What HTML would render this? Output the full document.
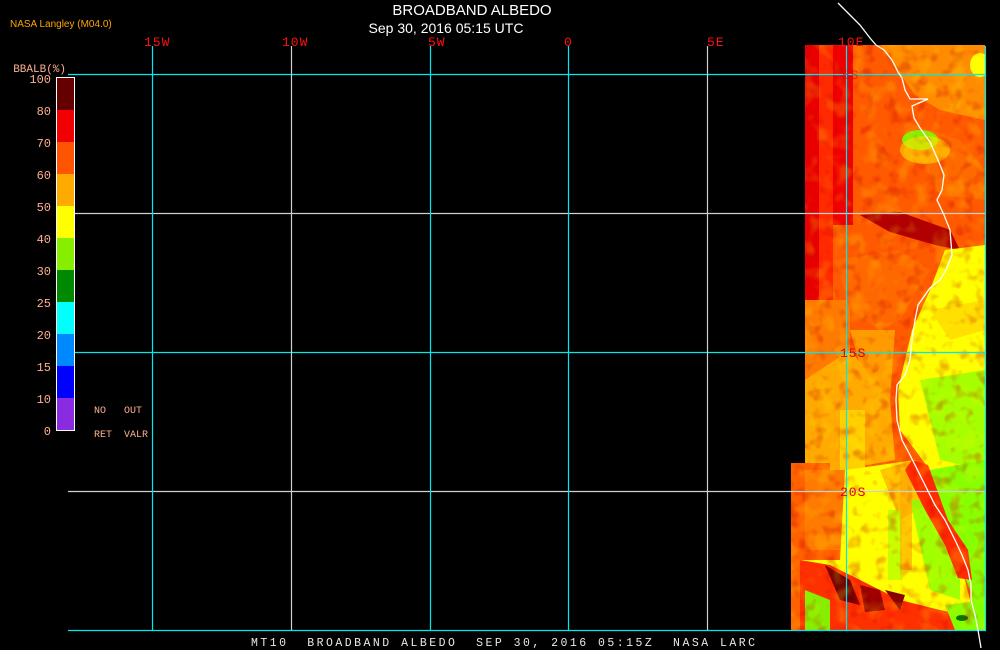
<!DOCTYPE html>
<html><head><style>
html,body{margin:0;padding:0;background:#000;width:1000px;height:650px;overflow:hidden}
svg{display:block}
text{font-family:"Liberation Sans",sans-serif}
.m text, text.m{font-family:"Liberation Mono","DejaVu Sans Mono",monospace}
</style></head><body>
<svg width="1000" height="650" viewBox="0 0 1000 650">
<defs>
<filter id="n" x="0" y="0" width="1" height="1">
<feTurbulence type="fractalNoise" baseFrequency="0.08" numOctaves="2" seed="4"/>
<feColorMatrix values="0 0 0 0 0.6  0 0 0 0 0  0 0 0 0 0  0 0 0 -4 1.9"/>
</filter>
<filter id="g" x="0" y="0" width="1" height="1">
<feTurbulence type="fractalNoise" baseFrequency="0.06" numOctaves="2" seed="9"/>
<feColorMatrix values="0 0 0 0 1  0 0 0 0 0.9  0 0 0 0 0  0 0 0 -4 2.0"/>
</filter>
<clipPath id="c"><path d="M805 45H985V630H791V463H805Z"/></clipPath>
</defs>
<g clip-path="url(#c)">
<rect x="780" y="40" width="210" height="600" fill="#ff5a00"/>
<rect x="805" y="45" width="14" height="420" fill="#e80000"/>
<rect x="819" y="45" width="14" height="260" fill="#ff2a00"/>
<rect x="833" y="45" width="20" height="180" fill="#f00000"/>
<rect x="805" y="300" width="45" height="170" fill="#ff7a00"/>
<polygon points="880,45 985,45 985,120 940,110 915,95" fill="#ff8c00"/>
<polygon points="900,120 960,140 985,170 985,200 940,195" fill="#ff6a00"/>
<ellipse cx="920" cy="140" rx="18" ry="10" fill="#88ee00"/>
<ellipse cx="925" cy="150" rx="25" ry="14" fill="#ffdd00" opacity=".6"/>
<ellipse cx="980" cy="65" rx="10" ry="12" fill="#ffff00"/>
<polygon points="860,215 900,212 950,230 960,250 935,245 890,232" fill="#b00000"/>
<polygon points="945,250 985,245 985,470 930,470 900,430 898,390 912,330 930,290" fill="#ffff00"/>
<polygon points="930,310 985,300 985,330 950,340" fill="#ffe000"/>
<polygon points="920,380 985,370 985,470 940,460" fill="#88ff00" opacity=".75"/>
<polygon points="835,260 900,250 930,270 900,320 880,330 850,310" fill="#ff6800"/>
<polygon points="850,330 895,330 890,400 870,400" fill="#ff9a00"/>
<polygon points="805,380 850,350 890,400 895,460 840,470 805,470" fill="#ffaa00"/>
<rect x="840" y="410" width="25" height="60" fill="#ffd000"/>
<polygon points="791,463 830,463 830,630 791,630" fill="#ff6000"/>
<rect x="805" y="470" width="40" height="80" fill="#ff7a00"/>
<polygon points="845,470 915,460 955,540 970,600 975,630 800,630 800,560 840,560" fill="#ffff00"/>
<polygon points="880,470 915,460 935,500 900,520" fill="#ffc000"/>
<polygon points="930,470 985,460 985,630 975,630 970,590 950,540" fill="#88ff00"/>
<polygon points="910,500 930,500 960,560 960,600 930,590" fill="#88ff00" opacity=".8"/>
<rect x="888" y="510" width="14" height="70" fill="#aaff00" opacity=".7"/>
<rect x="900" y="470" width="12" height="100" fill="#ffa000" opacity=".6"/>
<polygon points="912,460 928,465 948,520 968,550 972,580 958,578 945,545 925,510 905,470" fill="#ff2a00"/>
<polygon points="800,560 830,565 870,585 900,600 940,610 965,615 970,630 800,630" fill="#ff3000"/>
<polygon points="825,565 850,580 860,605 840,600" fill="#700000"/>
<polygon points="860,585 880,590 885,610 865,612" fill="#9a0000"/>
<polygon points="885,590 905,595 900,610" fill="#880000"/>
<polygon points="805,590 830,600 830,630 805,630" fill="#88ee00"/>
<polygon points="945,605 985,600 985,630 955,630" fill="#88ff00"/>
<ellipse cx="962" cy="618" rx="6" ry="3" fill="#007a00"/>
<rect x="780" y="40" width="210" height="600" filter="url(#n)" opacity=".3"/>
<rect x="780" y="40" width="210" height="600" filter="url(#g)" opacity=".2"/>
</g>
<g stroke-width="1.2">
<line x1="68" y1="74.5" x2="986" y2="74.5" stroke="#00e8f0"/>
<line x1="68" y1="213.5" x2="986" y2="213.5" stroke="#d0d0d0"/>
<line x1="68" y1="352.5" x2="986" y2="352.5" stroke="#00e8f0"/>
<line x1="68" y1="491.5" x2="986" y2="491.5" stroke="#d0d0d0"/>
<line x1="68" y1="630.5" x2="986" y2="630.5" stroke="#00e8f0"/>
<line x1="152.5" y1="46" x2="152.5" y2="630" stroke="#00e8f0"/>
<line x1="291.5" y1="46" x2="291.5" y2="630" stroke="#d0d0d0"/>
<line x1="430.5" y1="46" x2="430.5" y2="630" stroke="#00e8f0"/>
<line x1="568.5" y1="46" x2="568.5" y2="630" stroke="#00e8f0"/>
<line x1="707.5" y1="46" x2="707.5" y2="630" stroke="#d0d0d0"/>
<line x1="846.5" y1="46" x2="846.5" y2="630" stroke="#00e8f0"/>
<line x1="985.5" y1="46" x2="985.5" y2="630" stroke="#00e8f0"/>
</g>
<polyline fill="none" stroke="#fff" stroke-width="1.3" points="838,3 860,25 870,38 876,45 884,50 892,60 898,72 902,78 905,90 910,99 928,99 912,106 914,118 920,128 930,142 938,160 944,175 942,190 937,200 944,215 950,230 952,255 946,270 940,280 930,288 918,305 915,320 912,340 910,360 905,375 897,385 896,400 897,420 902,440 910,455 915,465 925,485 935,505 945,520 955,540 962,555 968,570 971,585 971,600 975,615 978,630 981,648"/>
<g class="m" font-size="13" letter-spacing="1">
<text x="840" y="357" fill="#e00000">15S</text>
<text x="840" y="496" fill="#e00000">20S</text>
<text x="842" y="79" fill="#e00000" opacity=".6">5S</text>
</g>
<g class="m" fill="#ff1010" font-size="13" letter-spacing="1">
<text x="144" y="46">15W</text>
<text x="282" y="46">10W</text>
<text x="428" y="46">5W</text>
<text x="564" y="46">0</text>
<text x="707" y="46">5E</text>
<text x="838" y="46">10E</text>
</g>
<text x="472" y="15" fill="#fff" font-size="15" text-anchor="middle">BROADBAND ALBEDO</text>
<text x="446" y="33" fill="#fff" font-size="14" text-anchor="middle">Sep 30, 2016 05:15 UTC</text>
<text x="10" y="27" fill="#ffa500" font-size="10">NASA Langley (M04.0)</text>
<g>
<rect x="57" y="78" width="17" height="32" fill="#660000"/>
<rect x="57" y="110" width="17" height="32" fill="#f00000"/>
<rect x="57" y="142" width="17" height="32" fill="#ff5500"/>
<rect x="57" y="174" width="17" height="32" fill="#ffaa00"/>
<rect x="57" y="206" width="17" height="32" fill="#ffff00"/>
<rect x="57" y="238" width="17" height="32" fill="#88ee00"/>
<rect x="57" y="270" width="17" height="32" fill="#008800"/>
<rect x="57" y="302" width="17" height="32" fill="#00ffff"/>
<rect x="57" y="334" width="17" height="32" fill="#0088ff"/>
<rect x="57" y="366" width="17" height="32" fill="#0000ff"/>
<rect x="57" y="398" width="17" height="32" fill="#8a2be2"/>
<rect x="56.5" y="77.5" width="18" height="353" fill="none" stroke="#fff" stroke-width="1"/>
</g>
<g class="m" fill="#ffb090" font-size="12" text-anchor="end">
<text x="66" y="72" font-size="11">BBALB(%)</text>
<text x="51" y="83">100</text>
<text x="51" y="115">80</text>
<text x="51" y="147">70</text>
<text x="51" y="179">60</text>
<text x="51" y="211">50</text>
<text x="51" y="243">40</text>
<text x="51" y="275">30</text>
<text x="51" y="307">25</text>
<text x="51" y="339">20</text>
<text x="51" y="371">15</text>
<text x="51" y="403">10</text>
<text x="51" y="435">0</text>
</g>
<g class="m" fill="#ffb090" font-size="10">
<text x="94" y="413">NO</text>
<text x="124" y="413">OUT</text>
<text x="94" y="437">RET</text>
<text x="124" y="437">VALR</text>
</g>
<text class="m" x="251" y="646" fill="#e8e8e8" font-size="11.5" xml:space="preserve" textLength="504">MT10  BROADBAND ALBEDO  SEP 30, 2016 05:15Z  NASA LARC</text>
</svg>
</body></html>
